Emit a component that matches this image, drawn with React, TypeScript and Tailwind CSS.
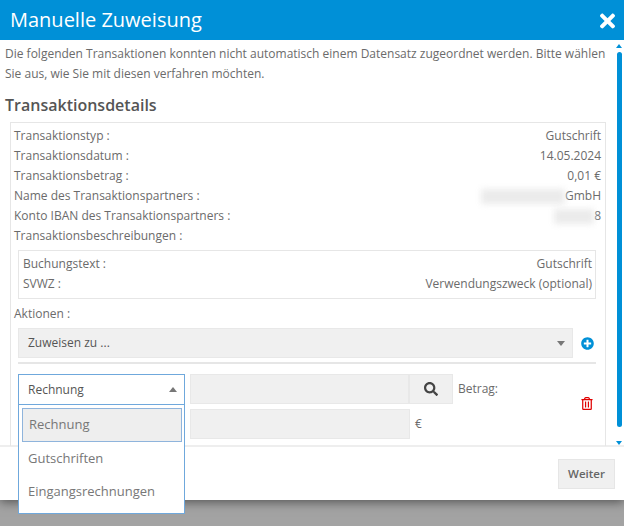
import { FaPlusCircle, FaRegTrashAlt, FaSearch, FaTimes } from 'react-icons/fa';

function Row({ label, children }: { label: string; children?: React.ReactNode }) {
  return (
    <div className="flex h-5 items-center justify-between">
      <span>{label}</span>
      {children}
    </div>
  );
}

function Hidden({ width }: { width: string }) {
  return <span className={`inline-block h-[15px] bg-[#ebebeb] blur-[3px] ${width}`} />;
}

export default function App() {
  return (
    <div className="flex h-[526px] w-[624px] flex-col overflow-hidden bg-[#a3a3a3] font-['Open_Sans',sans-serif] text-[12px] text-[#6b6b6b]">
      <div className="flex h-[500px] flex-col bg-white shadow-[0_2px_10px_rgba(0,0,0,0.5)]">
        <div className="flex h-10 shrink-0 items-center justify-between bg-[#0090d7] pl-[10px] pr-[9px] text-white">
          <h1 className="text-[20px] leading-none">Manuelle Zuweisung</h1>
          <FaTimes className="mt-[2px] h-[22px] w-[15px]" />
        </div>

        <div className="flex h-[407px] shrink-0 border-b-2 border-[#eeeeee]">
          <div className="w-[605px] shrink-0 pl-[5px] pt-[4px]">
            <p className="w-[604px] leading-[20px]">
              Die folgenden Transaktionen konnten nicht automatisch einem Datensatz zugeordnet werden. Bitte wählen Sie aus, wie Sie mit diesen verfahren möchten.
            </p>
            <h2 className="mt-[10px] text-[16px] font-semibold leading-[22px] text-[#555555]">Transaktionsdetails</h2>
            <div className="ml-[5px] mt-[6px] h-[324px] w-[596px] border-x border-t border-[#e6e6e6] pl-[3px] pr-[4px] pt-[3px]">
              <Row label="Transaktionstyp :"><span>Gutschrift</span></Row>
              <Row label="Transaktionsdatum :"><span>14.05.2024</span></Row>
              <Row label="Transaktionsbetrag :"><span>0,01 €</span></Row>
              <Row label="Name des Transaktionspartners :">
                <span className="flex items-center"><Hidden width="w-[84px]" />GmbH</span>
              </Row>
              <Row label="Konto IBAN des Transaktionspartners :">
                <span className="flex items-center"><Hidden width="w-[40px]" />8</span>
              </Row>
              <Row label="Transaktionsbeschreibungen :" />

              <div className="ml-1 mt-[4px] h-[49px] w-[578px] border border-[#e6e6e6] pl-1 pr-[3px] pt-[3px]">
                <Row label="Buchungstext :"><span>Gutschrift</span></Row>
                <Row label="SVWZ :"><span>Verwendungszweck (optional)</span></Row>
              </div>

              <div className="mt-[5px] flex h-5 items-center">Aktionen :</div>

              <div className="ml-1 mt-[4px] flex w-[582px] items-center">
                <div className="flex h-[30px] w-[555px] items-center justify-between border border-[#e8e8e8] bg-[#f0f0f0] pl-[9px] pr-[7px] text-[#555555]">
                  <span>Zuweisen zu ...</span>
                  <span className="h-0 w-0 border-x-[4px] border-t-[5px] border-x-transparent border-t-[#777777]" />
                </div>
                <FaPlusCircle className="ml-[8px] h-[13px] w-[13px] text-[#0090d7]" />
              </div>

              <div className="ml-1 mt-[4px] h-[2px] w-[578px] bg-[#e6e6e6]" />

              <div className="relative ml-1 mt-[10px] flex w-[578px]">
                <div className="w-[167px] shrink-0">
                  <div className="flex h-[31px] items-center justify-between border border-[#6fa8dc] bg-white pl-[9px] pr-[5px] text-[#555555]">
                    <span>Rechnung</span>
                    <span className="mr-[2px] h-0 w-0 border-x-[4px] border-b-[5px] border-x-transparent border-b-[#777777]" />
                  </div>
                </div>
                <div className="ml-[5px] flex w-[263px] shrink-0 flex-col gap-[5px]">
                  <div className="flex h-[30px]">
                    <div className="w-[220px] border border-[#e8e8e8] bg-[#f0f0f0]" />
                    <div className="flex w-[44px] items-center justify-center border border-[#e8e8e8] bg-[#f0f0f0] text-[#444444]">
                      <FaSearch className="h-[14px] w-[14px]" />
                    </div>
                  </div>
                  <div className="flex h-[30px] items-center">
                    <div className="h-full w-[220px] border border-[#e8e8e8] bg-[#f0f0f0]" />
                    <span className="ml-[5px]">€</span>
                  </div>
                </div>
                <span className="ml-[5px] mt-[5px] h-5 leading-5">Betrag:</span>
                <FaRegTrashAlt className="ml-auto mr-[3px] mt-[23px] h-[13px] w-[12px] text-[#e00000]" />

                <div className="absolute left-0 top-[30px] z-10 h-[110px] w-[167px] border border-[#6fa8dc] bg-white pl-[3px] pr-[2px] pt-[3px] text-[13px] text-[#777777]">
                  <div className="flex h-[34px] items-center border border-[#8fb4dc] bg-[#eeeeee] pl-[6px]">Rechnung</div>
                  <div className="flex h-[33px] items-center pl-[6px]">Gutschriften</div>
                  <div className="flex h-[34px] items-center pl-[6px]">Eingangsrechnungen</div>
                </div>
              </div>
            </div>
          </div>

          <div className="relative flex-1">
            <span className="absolute left-[11px] top-[4px] h-0 w-0 border-x-[3px] border-b-[4px] border-x-transparent border-b-[#0090d7]" />
            <div className="absolute left-[12px] top-[12px] h-[375px] w-[5px] rounded-full bg-[#0090d7]" />
            <span className="absolute left-[11px] top-[401px] h-0 w-0 border-x-[3px] border-t-[4px] border-x-transparent border-t-[#0090d7]" />
          </div>
        </div>

        <div className="flex flex-1 items-start justify-end pr-[9px] pt-[12px]">
          <button className="h-[30px] w-[57px] border border-[#e6e6e6] bg-[#f0f0f0] text-[11.5px] font-semibold text-[#666666]">Weiter</button>
        </div>
      </div>
    </div>
  );
}
